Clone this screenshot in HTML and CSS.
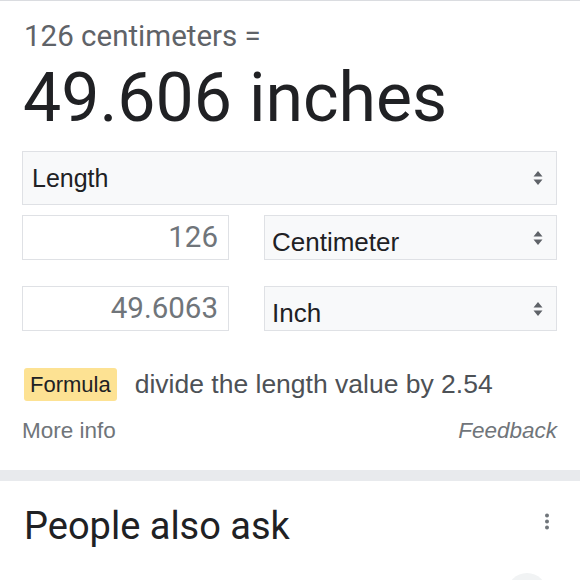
FILE: index.html
```html
<!DOCTYPE html>
<html lang="en">
<head>
<meta charset="utf-8">
<title>Unit converter</title>
<link rel="stylesheet" href="styles.css">
</head>
<body>
<div class="card">
  <div class="query">126 centimeters =</div>
  <div class="result">49.606 inches</div>
  <div class="select select-wide"><span class="sel-text">Length</span><span class="arrows"><svg width="10" height="16" viewBox="0 0 10 16"><path d="M5 1 L9.5 6.5 H0.5 Z M5 15 L9.5 9.5 H0.5 Z" fill="#5f6368"/></svg></span></div>
  <div class="row">
    <div class="input">126</div>
    <div class="select select-unit"><span class="sel-text">Centimeter</span><span class="arrows"><svg width="10" height="16" viewBox="0 0 10 16"><path d="M5 1 L9.5 6.5 H0.5 Z M5 15 L9.5 9.5 H0.5 Z" fill="#5f6368"/></svg></span></div>
  </div>
  <div class="row row-second">
    <div class="input">49.6063</div>
    <div class="select select-unit"><span class="sel-text">Inch</span><span class="arrows"><svg width="10" height="16" viewBox="0 0 10 16"><path d="M5 1 L9.5 6.5 H0.5 Z M5 15 L9.5 9.5 H0.5 Z" fill="#5f6368"/></svg></span></div>
  </div>
  <div class="formula"><span class="badge">Formula</span><span class="formula-text">divide the length value by 2.54</span></div>
  <div class="links"><span class="more">More info</span><span class="feedback">Feedback</span></div>
</div>
<div class="divider"></div>
<div class="paa">
  <div class="paa-head">
    <h2 class="paa-title">People also ask</h2>
    <span class="menu"><svg width="6" height="18" viewBox="0 0 6 18"><circle cx="3" cy="2.5" r="2" fill="#70757a"/><circle cx="3" cy="8.5" r="2" fill="#70757a"/><circle cx="3" cy="14.5" r="2" fill="#70757a"/></svg></span>
  </div>
  <div class="question"><span class="chevron"></span></div>
</div>
</body>
</html>
```
FILE: styles.css
```css
html, body {
  margin: 0;
  padding: 0;
  background: #fff;
  overflow: hidden;
}
body {
  border-top: 1px solid #dadce0;
  font-family: "Liberation Sans", Arial, sans-serif;
  color: #202124;
}
.card {
  padding: 19px 23px 26px 22px;
}
.query {
  font-family: Roboto, sans-serif;
  font-size: 29.5px;
  line-height: 32px;
  color: #5f6368;
  padding-left: 2px;
}
.result {
  font-family: Roboto, sans-serif;
  font-size: 68px;
  line-height: 80px;
  color: #202124;
  margin-top: 6px;
  padding-left: 1px;
}
.select {
  display: flex;
  align-items: center;
  justify-content: space-between;
  box-sizing: border-box;
  background: #f8f9fa;
  border: 1px solid #dfe1e5;
  font-size: 25px;
  color: #202124;
}
.select-wide {
  margin-top: 13px;
  height: 54px;
  padding: 0 13px 0 9px;
}
.select-unit {
  flex: 1;
  height: 45px;
  padding: 8px 13px 0 7px;
  font-size: 26px;
}
.sel-text {
  line-height: 28px;
}
.select-unit .arrows {
  margin-top: -8px;
}
.arrows {
  display: flex;
}
.row {
  display: flex;
  gap: 35px;
  margin-top: 10px;
}
.row-second {
  margin-top: 26px;
}
.input {
  box-sizing: border-box;
  width: 207px;
  height: 45px;
  border: 1px solid #dfe1e5;
  background: #fff;
  font-family: Roboto, sans-serif;
  font-size: 29.5px;
  line-height: 43px;
  color: #70757a;
  text-align: right;
  padding-right: 10px;
}
.formula {
  display: flex;
  align-items: center;
  gap: 18px;
  margin-top: 37px;
  padding-left: 2px;
}
.badge {
  background: #fde293;
  border-radius: 3px;
  font-size: 22px;
  line-height: 33px;
  padding: 0 6px;
  color: #202124;
}
.formula-text {
  font-size: 26.5px;
  color: #4d5156;
}
.links {
  display: flex;
  justify-content: space-between;
  margin-top: 17px;
  font-size: 22.5px;
  line-height: 26px;
  color: #70757a;
}
.feedback {
  font-style: italic;
}
.divider {
  height: 11px;
  background: #e8eaed;
}
.paa {
  padding: 23px 23px 0 24px;
}
.paa-head {
  display: flex;
  justify-content: space-between;
  align-items: flex-start;
}
.paa-title {
  margin: 0;
  font-family: Roboto, sans-serif;
  font-weight: 400;
  font-size: 38px;
  line-height: 44px;
  color: #202124;
}
.menu {
  display: flex;
  margin-top: 9px;
  margin-right: 7px;
}
.question {
  display: flex;
  justify-content: flex-end;
  margin-top: 25px;
}
.chevron {
  width: 40px;
  height: 40px;
  border-radius: 50%;
  background: #f1f3f4;
  margin-right: 10px;
}
```
